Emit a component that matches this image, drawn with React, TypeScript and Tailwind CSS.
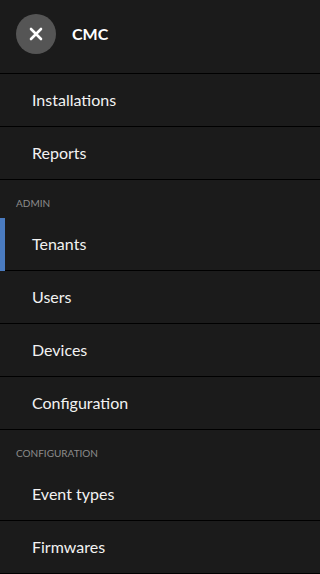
import React from 'react';

type NavItem = { label: string; active?: boolean };

const mainItems: NavItem[] = [{ label: 'Installations' }, { label: 'Reports' }];
const adminItems: NavItem[] = [
    { label: 'Tenants', active: true },
    { label: 'Users' },
    { label: 'Devices' },
    { label: 'Configuration' },
];
const configItems: NavItem[] = [{ label: 'Event types' }, { label: 'Firmwares' }];

function Item({ label, active }: NavItem) {
    return (
        <div className="relative flex items-center h-[53px] pl-8 border-b border-black">
            {active && <span className="absolute left-0 top-0 bottom-[-1px] w-[5px] bg-[#4a7bc0]" />}
            <span className="text-[16px] text-[#f2f2f2]">{label}</span>
        </div>
    );
}

function Section({ title }: { title: string }) {
    return (
        <div className="h-[38px] pl-4 pt-[18px]">
            <span className="block text-[10px] leading-[10px] uppercase text-[#8c8c8c]">{title}</span>
        </div>
    );
}

export default function App() {
    return (
        <nav
            className="w-[320px] h-[574px] overflow-hidden bg-[#1b1b1b]"
            style={{ fontFamily: 'Lato, "Open Sans", sans-serif' }}
        >
            {/* Header */}
            <header className="flex items-center h-[74px] px-4 pb-[6px] gap-4 border-b border-black">
                <button className="flex items-center justify-center w-10 h-10 rounded-full bg-[#555555]">
                    <svg width="14" height="14" viewBox="0 0 14 14" fill="none">
                        <path d="M2 2L12 12M12 2L2 12" stroke="#fff" strokeWidth="2.6" strokeLinecap="round" />
                    </svg>
                </button>
                <span className="text-[16px] font-bold text-white">CMC</span>
            </header>

            {mainItems.map((i) => (
                <Item key={i.label} {...i} />
            ))}

            <Section title="Admin" />
            {adminItems.map((i) => (
                <Item key={i.label} {...i} />
            ))}

            <Section title="Configuration" />
            {configItems.map((i) => (
                <Item key={i.label} {...i} />
            ))}
        </nav>
    );
}
